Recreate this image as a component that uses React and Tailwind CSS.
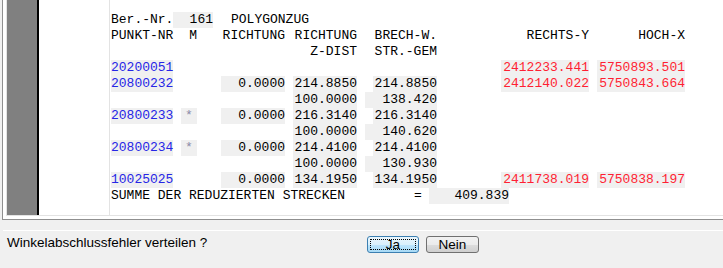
import React from 'react';

const rows = [
  { p: '20200051', y: '2412233.441', x: '5750893.501' },
  { p: '20800232', r: '0.0000', z: '214.8850', b: '214.8850', y: '2412140.022', x: '5750843.664' },
  { z: '100.0000', s: '138.420' },
  { p: '20800233', m: '*', r: '0.0000', z: '216.3140', b: '216.3140' },
  { z: '100.0000', s: '140.620' },
  { p: '20800234', m: '*', r: '0.0000', z: '214.4100', b: '214.4100' },
  { z: '100.0000', s: '130.930' },
  { p: '10025025', r: '0.0000', z: '134.1950', b: '134.1950', y: '2411738.019', x: '5750838.197' },
];

const Cell = ({ className = '', on, children }) => (
  <div className={`shrink-0 h-4 whitespace-pre ${on ? 'bg-[#f0f0f0]' : ''} ${className}`}>{children}</div>
);

const DataRow = ({ row }) => (
  <div className="flex h-4">
    <Cell className="w-[62px] text-[#2626e6]" on={!!row.p}>{row.p}</Cell>
    <Cell className="ml-[8px] w-[16px] text-center text-[#8a8aa8]" on={!!row.m}>{row.m}</Cell>
    <Cell className="ml-[24px] w-[64px] text-right" on={!!row.r}>{row.r}</Cell>
    <Cell className="ml-[8px] w-[64px] text-right" on={!!row.z}>{row.z}</Cell>
    <div className="ml-[8px] w-[72px] shrink-0 flex justify-end">
      {row.b && <Cell className="w-[64px] text-right" on>{row.b}</Cell>}
      {row.s && <Cell className="w-[72px] text-right" on>{row.s}</Cell>}
    </div>
    <Cell className="ml-[64px] w-[88px] text-right text-[#ff1f33]" on={!!row.y}>{row.y}</Cell>
    <Cell className="ml-[8px] w-[88px] text-right text-[#ff1f33]" on={!!row.x}>{row.x}</Cell>
  </div>
);

export default function App() {
  return (
    <div className="w-[723px] h-[268px] bg-[#f0f0f0] overflow-hidden">
      {/* listing frame */}
      <div className="ml-[2px] h-[220px] border-l border-b border-[#8f8f8f] bg-white pl-[3px]">
        <div className="h-[216px] flex border-l border-b border-[#e3e3e3]">
          <div className="w-[32px] shrink-0 bg-[#808080] border-r-2 border-black" />
          <div className="w-[71px] shrink-0 bg-white border-r border-[#e3e3e3]" />
          <div className="flex-1 pl-[1px] pt-[12px] font-['Liberation_Mono',monospace] text-[13px] leading-4 text-black">
            <div className="flex h-4">
              <Cell className="w-[62px]">Ber.-Nr.</Cell>
              <Cell className="w-[40px] text-right" on>161</Cell>
              <Cell className="ml-[18px]">POLYGONZUG</Cell>
            </div>
            <div className="flex h-4">
              <Cell className="w-[62px]">PUNKT-NR</Cell>
              <Cell className="ml-[8px] w-[16px] text-right">M</Cell>
              <Cell className="ml-[24px] w-[64px] text-right">RICHTUNG</Cell>
              <Cell className="ml-[8px] w-[64px] text-right">RICHTUNG</Cell>
              <Cell className="ml-[8px] w-[72px] text-right">BRECH-W.</Cell>
              <Cell className="ml-[64px] w-[88px] text-right">RECHTS-Y</Cell>
              <Cell className="ml-[8px] w-[88px] text-right">HOCH-X</Cell>
            </div>
            <div className="flex h-4">
              <Cell className="ml-[182px] w-[64px] text-right">Z-DIST</Cell>
              <Cell className="ml-[8px] w-[72px] text-right">STR.-GEM</Cell>
            </div>
            {rows.map((row, i) => (
              <DataRow key={i} row={row} />
            ))}
            <div className="flex h-4">
              <Cell className="w-[303px]">SUMME DER REDUZIERTEN STRECKEN</Cell>
              <Cell className="w-[8px]">=</Cell>
              <Cell className="ml-[7px] w-[80px] text-right" on>409.839</Cell>
            </div>
          </div>
        </div>
      </div>

      {/* question bar */}
      <div className="mt-[10px] ml-[3px] border-t border-white flex items-start pt-[4px] pl-[4px] font-['Liberation_Sans',Arial,sans-serif] text-[13.5px] leading-4 text-black">
        <div className="w-[360px] shrink-0">Winkelabschlussfehler verteilen ?</div>
        <button className="relative mt-[1px] w-[52px] h-[17px] rounded-[3px] border border-[#3c7fb1] bg-[linear-gradient(#eaf6fd_0%,#d9f0fc_50%,#bee6fd_50%,#a7d9f5_100%)] leading-[15px] text-center">
          <span className="absolute inset-[2px] border border-dotted border-black rounded-[1px]" />
          Ja
        </button>
        <button className="ml-[7px] mt-[1px] w-[53px] h-[17px] rounded-[3px] border border-[#707070] bg-[linear-gradient(#f2f2f2_0%,#ebebeb_50%,#dddddd_50%,#cfcfcf_100%)] leading-[15px] text-center">
          Nein
        </button>
      </div>
    </div>
  );
}
